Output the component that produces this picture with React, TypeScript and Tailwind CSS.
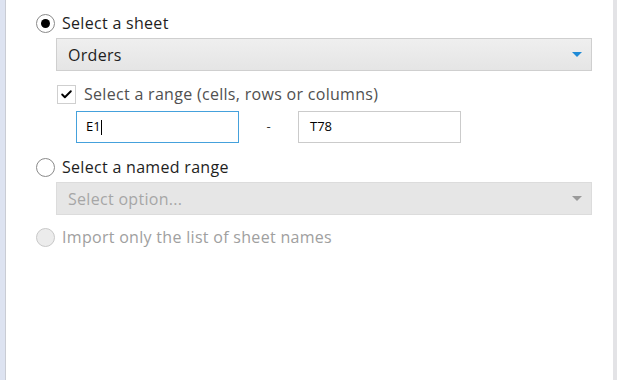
import { Check } from 'lucide-react';

function Radio({ checked, disabled }: { checked?: boolean; disabled?: boolean }) {
  return (
    <span
      className={
        'w-[19px] h-[19px] rounded-full border flex items-center justify-center shrink-0 ' +
        (disabled ? 'border-[#c8c8c8] bg-[#ececec]' : 'border-[#8a8a8a] bg-white')
      }
    >
      {checked && <span className="w-[9px] h-[9px] rounded-full bg-black" />}
    </span>
  );
}

function Caret({ color }: { color: string }) {
  return (
    <svg width="10" height="6" viewBox="0 0 10 6">
      <path d="M0 0 L10 0 L5 5 Z" fill={color} />
    </svg>
  );
}

export default function App() {
  return (
    <div
      className="w-[620px] h-[380px] bg-white flex text-[#1e1e1e]"
      style={{ fontFamily: '"Open Sans", "Noto Sans", sans-serif' }}
    >
      {/* left window edge */}
      <div className="w-[6px] h-full bg-[#dde3f1] border-r border-[#c9ccd4]" />

      <div className="flex-1 flex flex-col pl-[30px] pr-[21px] pt-[12px]">
        {/* select a sheet */}
        <div className="flex items-center gap-[7px] h-[22px]">
          <Radio checked />
          <span className="text-[16px] tracking-[0.3px]">Select a sheet</span>
        </div>
        <div className="ml-[20px] mt-[4px] h-[33px] border border-[#cfcfcf] bg-gradient-to-b from-[#efefef] to-[#e5e5e5] flex items-center justify-between pl-[11px] pr-[9px]">
          <span className="text-[16px] tracking-[0.3px]">Orders</span>
          <Caret color="#1e8ad6" />
        </div>

        <div className="ml-[21px] mt-[13px] flex items-center gap-[8px] h-[20px]">
          <span className="w-[19px] h-[19px] border border-[#cfcfcf] bg-white flex items-center justify-center">
            <Check className="w-[13px] h-[13px] text-black" strokeWidth={3.5} />
          </span>
          <span className="text-[16px] tracking-[0.3px] text-[#505050]">
            Select a range (cells, rows or columns)
          </span>
        </div>

        <div className="ml-[40px] mt-[7px] flex items-center">
          <div className="w-[163px] h-[32px] border border-[#45a1dc] flex items-center px-[9px]">
            <span className="text-[13px] text-black">E1</span>
            <span className="w-px h-[15px] bg-black" />
          </div>
          <span className="w-[59px] text-center text-[13px] text-[#333]">-</span>
          <div className="w-[163px] h-[32px] border border-[#cbcbcb] flex items-center px-[11px]">
            <span className="text-[13px] text-black">T78</span>
          </div>
        </div>

        {/* named range */}
        <div className="flex items-center gap-[7px] h-[22px] mt-[13px]">
          <Radio />
          <span className="text-[16px] tracking-[0.3px]">Select a named range</span>
        </div>
        <div className="ml-[20px] mt-[4px] h-[33px] border border-[#dcdcdc] bg-[#e6e6e6] flex items-center justify-between pl-[11px] pr-[9px]">
          <span className="text-[16px] tracking-[0.3px] text-[#a6a6a6]">Select option...</span>
          <Caret color="#9a9a9a" />
        </div>

        <div className="flex items-center gap-[7px] h-[22px] mt-[11px]">
          <Radio disabled />
          <span className="text-[16px] tracking-[0.3px] text-[#a0a0a0]">
            Import only the list of sheet names
          </span>
        </div>
      </div>

      {/* right window edge */}
      <div className="w-[4px] h-full bg-[#e3e3e6] mr-[3px]" />
    </div>
  );
}
